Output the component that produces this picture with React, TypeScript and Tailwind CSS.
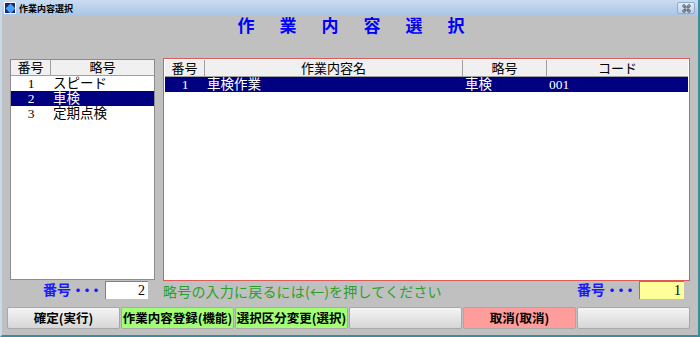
import React from "react";

const jp = { fontFamily: '"Liberation Serif", "Noto Sans CJK JP", serif' };
const jpSans = { fontFamily: '"Noto Sans CJK JP", sans-serif' };

function HeaderCell({ children, className = "" }: { children?: React.ReactNode; className?: string }) {
  return (
    <div
      className={
        "flex items-center justify-center bg-[#f0f0f0] border-r border-b border-[#a0a0a0] text-[13px] leading-none text-black " +
        className
      }
    >
      {children}
    </div>
  );
}

function Btn({ label, color }: { label?: string; color: "gray" | "green" | "pink" }) {
  const bg =
    color === "green"
      ? "bg-[#a2ff74]"
      : color === "pink"
      ? "bg-[#ff9c9c]"
      : "bg-gradient-to-b from-[#f4f4f4] to-[#d6d6d6]";
  return (
    <div
      className={
        "w-[113px] h-[22px] rounded-[2px] border border-[#a8a8a8] flex items-center justify-center text-[12.5px] font-bold text-black " +
        bg
      }
      style={jpSans}
    >
      {label}
    </div>
  );
}

function NumLabel({ className = "" }: { className?: string }) {
  return (
    <div
      className={"flex items-center whitespace-nowrap text-[14px] text-[#1a1aff] font-bold leading-[18px] " + className}
      style={jp}
    >
      <span>番号</span>
      <span className="tracking-[-5px] pr-[5px]">・・・</span>
    </div>
  );
}

export default function App() {
  return (
    <div className="w-[700px] h-[337px] bg-[#c0c0c0] flex flex-col overflow-hidden border-l-2 border-[#c9d9ec] border-r-[2px] border-r-[#3b8d9e] border-b-[2px] border-b-[#3b8d9e] relative">
      {/* title bar */}
      <div className="h-[16px] bg-gradient-to-b from-[#cadcf1] to-[#a9c4e5] flex items-center pl-[2px] pr-[3px] shrink-0">
        <div className="w-[12px] h-[12px] bg-[#1a2a6a] border border-[#ffffff] flex items-center justify-center">
          <div className="w-[7px] h-[7px] bg-[#4aa0ff] rotate-45" />
        </div>
        <span className="ml-[3px] text-[9px] font-bold text-black leading-none" style={jpSans}>
          作業内容選択
        </span>
        <div className="ml-auto w-[18px] h-[12px] rounded-[2px] border border-[#8fa9c8] bg-gradient-to-b from-[#e4eef9] to-[#bcd0e8] flex items-center justify-center">
          <svg width="9" height="9" viewBox="0 0 9 9" fill="none" stroke="#505a66" strokeWidth="1">
            <circle cx="2" cy="2" r="1.3" />
            <circle cx="7" cy="2" r="1.3" />
            <circle cx="2" cy="7" r="1.3" />
            <circle cx="7" cy="7" r="1.3" />
            <rect x="3" y="3" width="3" height="3" />
          </svg>
        </div>
      </div>

      {/* heading */}
      <div className="h-[43px] shrink-0 flex justify-center pl-[2px]">
        <div
          className="text-[17px] font-bold text-[#0000ff] leading-none tracking-[25px] pl-[25px]"
          style={{ fontFamily: '"Noto Sans CJK JP", serif' }}
        >
          作業内容選択
        </div>
      </div>

      {/* main panels */}
      <div className="flex h-[222px] shrink-0 pl-[8px]">
        {/* left list */}
        <div className="w-[145px] h-[221px] bg-white border border-[#8c8c8c] flex flex-col" style={jp}>
          <div className="grid grid-cols-[40px_1fr] h-[16px]">
            <HeaderCell>番号</HeaderCell>
            <HeaderCell className="border-r-0">略号</HeaderCell>
          </div>
          <div className="grid grid-cols-[40px_1fr] h-[15px] text-[13.5px] leading-none items-center text-black">
            <div className="text-center">1</div>
            <div className="pl-[2px]">スピード</div>
          </div>
          <div className="grid grid-cols-[40px_1fr] h-[15px] text-[13.5px] leading-none items-center text-white bg-[#000080]">
            <div className="text-center">2</div>
            <div className="pl-[2px]">車検</div>
          </div>
          <div className="grid grid-cols-[40px_1fr] h-[15px] text-[13.5px] leading-none items-center text-black">
            <div className="text-center">3</div>
            <div className="pl-[2px]">定期点検</div>
          </div>
        </div>

        {/* right table */}
        <div className="ml-[8px] w-[527px] h-[223px] -mt-[1px] border border-[#e05a5a] bg-white p-[1px] flex flex-col" style={jp}>
          <div className="grid grid-cols-[40px_258px_84px_1fr] h-[17px]">
            <HeaderCell>番号</HeaderCell>
            <HeaderCell>作業内容名</HeaderCell>
            <HeaderCell>略号</HeaderCell>
            <HeaderCell className="border-r-0">コード</HeaderCell>
          </div>
          <div className="grid grid-cols-[40px_258px_84px_1fr] h-[15px] text-[13.5px] leading-none items-center text-white bg-[#000080]">
            <div className="text-center">1</div>
            <div className="pl-[2px]">車検作業</div>
            <div className="pl-[2px]">車検</div>
            <div className="pl-[2px]">001</div>
          </div>
        </div>
      </div>

      {/* info row */}
      <div className="h-[26px] shrink-0 flex items-start">
        <NumLabel className="ml-[41px] pt-[1px]" />
        <div className="ml-[2px] w-[43px] h-[18px] bg-white border-l border-t border-[#808080] flex items-center justify-end pr-[3px] text-[14px] leading-none text-black" style={jp}>
          2
        </div>
        <div className="ml-[15px] text-[14px] leading-[18px] text-[#2aa02a] pt-[1px] whitespace-nowrap tracking-[0.2px]" style={jpSans}>
          略号の入力に戻るには(←)を押してください
        </div>
        <NumLabel className="ml-auto pt-[1px]" />
        <div className="ml-[2px] mr-[14px] w-[45px] h-[18px] bg-[#ffff99] border-l border-t border-[#808080] flex items-center justify-end pr-[3px] text-[14px] leading-none text-black" style={jp}>
          1
        </div>
      </div>

      {/* buttons */}
      <div className="flex gap-[1px] pl-[5px] shrink-0">
        <Btn label="確定(実行)" color="gray" />
        <Btn label="作業内容登録(機能)" color="green" />
        <Btn label="選択区分変更(選択)" color="green" />
        <Btn color="gray" />
        <Btn label="取消(取消)" color="pink" />
        <Btn color="gray" />
      </div>
    </div>
  );
}
